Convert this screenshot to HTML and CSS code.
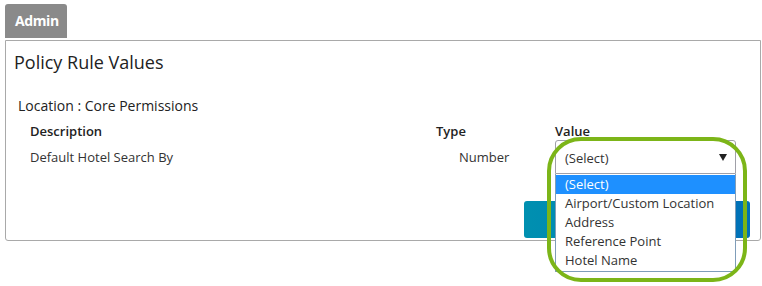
FILE: index.html
```html
<!DOCTYPE html>
<html>
<head>
<meta charset="utf-8">
<link rel="stylesheet" href="styles.css">
</head>
<body>
<div class="page">
  <div class="tab">Admin</div>
  <div class="panel">
    <h1 class="title">Policy Rule Values</h1>
    <div class="location">Location : Core Permissions</div>
    <div class="grid">
      <div class="head">Description</div>
      <div class="head">Type</div>
      <div class="head">Value</div>
      <div class="cell desc">Default Hotel Search By</div>
      <div class="cell type">Number</div>
      <div class="cell value">
        <div class="select"><span>(Select)</span><span class="arrow"></span></div>
        <ul class="options">
          <li class="active">(Select)</li>
          <li>Airport/Custom Location</li>
          <li>Address</li>
          <li>Reference Point</li>
          <li>Hotel Name</li>
        </ul>
      </div>
    </div>
    <div class="actions"><div class="btn"></div></div>
  </div>
  <div class="ring"></div>
</div>
</body>
</html>
```
FILE: styles.css
```css
html, body { margin: 0; padding: 0; background: #fff; }
body { font-family: "Open Sans", "DejaVu Sans", sans-serif; color: #333; }
.page { position: relative; width: 762px; height: 286px; padding: 4px 0 0 5px; box-sizing: border-box; }
.tab {
  width: 62px; height: 34px; box-sizing: border-box;
  background: #8a8a8a; color: #fff; font-weight: 700; font-size: 14px;
  border-radius: 3px 3px 0 0; padding: 0 0 0 10px; line-height: 34px;
  letter-spacing: -0.4px;
}
.panel {
  margin-top: 2px; width: 756px; height: 201px; box-sizing: border-box;
  border: 1px solid #a9a9a9; border-radius: 0 0 3px 3px; padding: 8px 0 0 8px;
}
.title { margin: 0; font-size: 18px; font-weight: 400; color: #222; line-height: 26px; }
.location { margin: 21px 0 0 4px; font-size: 14px; line-height: 20px; color: #222; }
.grid { display: grid; grid-template-columns: 406px 119px 181px; margin: 7px 0 0 16px; }
.head { font-size: 13px; font-weight: 600; color: #222; line-height: 16px; }
.cell { font-size: 13px; color: #333; }
.desc, .type { padding-top: 9px; }
.type { padding-left: 23px; }
.value { position: relative; }
.select {
  height: 34px; margin-top: 1px; box-sizing: border-box; border: 1px solid #a0a0a8; border-radius: 3px 3px 0 0;
  display: flex; align-items: center; justify-content: space-between; padding: 2px 8px 0 9px; color: #333;
}
.arrow { width: 0; height: 0; border-left: 4px solid transparent; border-right: 4px solid transparent; border-top: 7px solid #222; margin-top: -2px; }
.options {
  position: absolute; left: 0; top: 35px; width: 181px; box-sizing: border-box;
  margin: 0; padding: 1px 0 1px; list-style: none; background: #fff;
  border: 1px solid #7f9db9; border-top: none; z-index: 2;
}
.options li { height: 19px; line-height: 19px; padding-left: 9px; font-size: 13px; color: #333; }
.options li.active { background: #1e90ff; color: #fff; }
.actions { display: flex; justify-content: flex-end; margin: 27px 10px 0 0; }
.btn { width: 226px; height: 37px; border-radius: 3px; background: linear-gradient(90deg, #0090b0, #0070b8); }
.ring {
  position: absolute; left: 547px; top: 137px; width: 200px; height: 145px; box-sizing: border-box;
  border: 4px solid #7cb518; border-radius: 34px; z-index: 3;
}
```
